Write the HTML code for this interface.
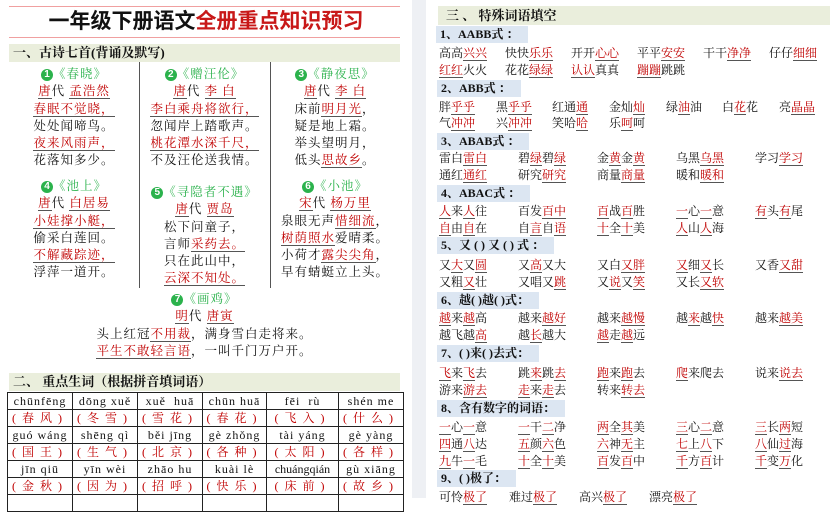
<!DOCTYPE html>
<html><head><meta charset="utf-8">
<style>
*{margin:0;padding:0;box-sizing:border-box}
body{width:839px;height:498px;overflow:hidden;background:#fff;position:relative;font-family:"Liberation Serif","Noto Serif CJK SC",serif;color:#111}
.a{position:absolute;white-space:nowrap}
.r{color:#c00000;font-weight:normal;border-bottom:1.5px solid #555}
.bar{position:absolute;background:#eaeedc;font-weight:bold;font-size:13px;line-height:18px;padding-left:4px;white-space:nowrap}
.lab{position:absolute;background:#dce6f2;font-weight:bold;font-size:12px;line-height:17px;padding:0 10px 0 4px;height:17px;white-space:nowrap;width:auto!important}
.col{position:absolute;text-align:center;font-size:12.5px;letter-spacing:1px}
.col div{height:17.3px;line-height:17px;white-space:nowrap}
.t{color:#2bb24c}
.n{display:inline-block;width:12px;height:12px;border-radius:50%;background:#2bb24c;color:#fff;font-size:10px;line-height:12px;font-weight:bold;text-align:center;letter-spacing:0;font-family:"Liberation Sans",sans-serif;vertical-align:1px}
.row{position:absolute;left:439px;font-size:12px;line-height:16px;white-space:nowrap}
.row span.c{display:inline-block}
table{position:absolute;left:7px;top:392px;border-collapse:collapse;font-size:12px;table-layout:fixed}
td{border:1px solid #222;height:17px;text-align:center;padding:0;line-height:15px;white-space:nowrap;overflow:hidden}
td.p{letter-spacing:1px}
td.h{color:#c00000;letter-spacing:6px}
</style></head><body>
<div class="a" style="left:412px;top:0;width:14px;height:498px;background:#eef0f4"></div>
<div class="a" style="left:9px;top:6px;width:391px;height:1px;background:#f0a0a0"></div>
<div class="a" style="left:9px;top:37px;width:391px;height:1px;background:#f0a0a0"></div>
<div class="a" style="left:0;width:412px;top:9px;text-align:center;font-size:21px;font-weight:bold;line-height:26px;font-family:'Liberation Sans','Noto Sans CJK SC',sans-serif">一年级下册语文<span style="color:#c81818">全册重点知识预习</span></div>
<div class="bar" style="left:9px;top:44px;width:391px">一、古诗七首(背诵及默写)</div>
<div class="a" style="left:139px;top:62px;width:1px;height:226px;background:#555"></div>
<div class="a" style="left:270px;top:62px;width:1px;height:226px;background:#555"></div>

<div class="col" style="left:9px;top:66px;width:130px">
<div class="t"><span class="n">1</span>《春晓》</div>
<div><span class="r">唐</span>代 <span class="r">孟浩然</span></div>
<div><span class="r">春眠不觉晓，</span></div>
<div>处处闻啼鸟。</div>
<div><span class="r">夜来风雨声，</span></div>
<div>花落知多少。</div>
</div>
<div class="col" style="left:9px;top:178px;width:130px">
<div class="t"><span class="n">4</span>《池上》</div>
<div><span class="r">唐</span>代 <span class="r">白居易</span></div>
<div><span class="r">小娃撑小艇，</span></div>
<div>偷采白莲回。</div>
<div><span class="r">不解藏踪迹，</span></div>
<div>浮萍一道开。</div>
</div>
<div class="col" style="left:139px;top:66px;width:131px">
<div class="t"><span class="n">2</span>《赠汪伦》</div>
<div><span class="r">唐</span>代 <span class="r">李 白</span></div>
<div><span class="r">李白乘舟将欲行，</span></div>
<div>忽闻岸上踏歌声。</div>
<div><span class="r">桃花潭水深千尺，</span></div>
<div>不及汪伦送我情。</div>
</div>
<div class="col" style="left:139px;top:184px;width:131px">
<div class="t"><span class="n">5</span>《寻隐者不遇》</div>
<div><span class="r">唐</span>代 <span class="r">贾岛</span></div>
<div>松下问童子，</div>
<div>言师<span class="r">采药去。</span></div>
<div>只在此山中，</div>
<div><span class="r">云深不知处。</span></div>
</div>
<div class="col" style="left:270px;top:66px;width:130px">
<div class="t"><span class="n">3</span>《静夜思》</div>
<div><span class="r">唐</span>代 <span class="r">李 白</span></div>
<div>床前<span class="r">明月光</span>，</div>
<div>疑是地上霜。</div>
<div>举头望明月，</div>
<div>低头<span class="r">思故乡</span>。</div>
</div>
<div class="col" style="left:270px;top:178px;width:130px">
<div class="t"><span class="n">6</span>《小池》</div>
<div><span class="r">宋</span>代 <span class="r">杨万里</span></div>
<div>泉眼无声<span class="r">惜细流</span>，</div>
<div><span class="r">树荫照水</span>爱晴柔。</div>
<div>小荷才<span class="r">露尖尖角</span>，</div>
<div>早有蜻蜓立上头。</div>
</div>
<div class="col" style="left:9px;top:291px;width:391px">
<div class="t"><span class="n">7</span>《画鸡》</div>
<div><span class="r">明</span>代 <span class="r">唐寅</span></div>
<div>头上红冠<span class="r">不用裁</span>，满身雪白走将来。</div>
<div><span class="r">平生不敢轻言语</span>，一叫千门万户开。</div>
</div>
<div class="bar" style="left:9px;top:373px;width:391px">二、 重点生词（根据拼音填词语）</div>
<table style="width:396px">
<colgroup><col style="width:65px"><col style="width:65px"><col style="width:65px"><col style="width:64px"><col style="width:72px"><col style="width:65px"></colgroup>
<tr><td class="p">chūnfēng</td><td class="p">dōng xuě</td><td class="p">xuě &nbsp;huā</td><td class="p">chūn huā</td><td class="p">fēi &nbsp;rù</td><td class="p">shén me</td></tr>
<tr><td class="h">(春风)</td><td class="h">(冬雪)</td><td class="h">(雪花)</td><td class="h">(春花)</td><td class="h">(飞入)</td><td class="h">(什么)</td></tr>
<tr><td class="p">guó wáng</td><td class="p">shēng qì</td><td class="p">běi jīng</td><td class="p">gè zhǒng</td><td class="p">tài yáng</td><td class="p">gè yàng</td></tr>
<tr><td class="h">(国王)</td><td class="h">(生气)</td><td class="h">(北京)</td><td class="h">(各种)</td><td class="h">(太阳)</td><td class="h">(各样)</td></tr>
<tr><td class="p">jīn qiū</td><td class="p">yīn wèi</td><td class="p">zhāo hu</td><td class="p">kuài lè</td><td class="p" style="letter-spacing:0">chuángqián</td><td class="p">gù xiāng</td></tr>
<tr><td class="h">(金秋)</td><td class="h">(因为)</td><td class="h">(招呼)</td><td class="h">(快乐)</td><td class="h">(床前)</td><td class="h">(故乡)</td></tr>
<tr><td>&nbsp;</td><td></td><td></td><td></td><td></td><td></td></tr>
</table>

<div class="bar" style="left:438px;top:6px;width:392px;padding-left:8px;line-height:19px">三 、 特殊词语填空</div>
<div class="lab" style="left:436px;top:26px">1、AABB式 ：</div>
<div class="row" style="top:45px"><span class="c" style="width:66px">高高<span class="r">兴兴</span></span><span class="c" style="width:66px">快快<span class="r">乐乐</span></span><span class="c" style="width:66px">开开<span class="r">心心</span></span><span class="c" style="width:66px">平平<span class="r">安安</span></span><span class="c" style="width:66px">干干<span class="r">净净</span></span><span class="c">仔仔<span class="r">细细</span></span></div>
<div class="row" style="top:62px"><span class="c" style="width:66px"><span class="r">红红</span>火火</span><span class="c" style="width:66px">花花<span class="r">绿绿</span></span><span class="c" style="width:66px"><span class="r">认认</span>真真</span><span class="c" style="width:66px"><span class="r">蹦蹦</span>跳跳</span></div>
<div class="lab" style="left:437px;top:80px">2、ABB式 ：</div>
<div class="row" style="top:99px"><span class="c" style="width:57px">胖<span class="r">乎乎</span></span><span class="c" style="width:56px">黑<span class="r">乎乎</span></span><span class="c" style="width:57px">红通<span class="r">通</span></span><span class="c" style="width:57px">金灿<span class="r">灿</span></span><span class="c" style="width:56px">绿<span class="r">油</span>油</span><span class="c" style="width:57px">白<span class="r">花</span>花</span><span class="c">亮<span class="r">晶晶</span></span></div>
<div class="row" style="top:115px"><span class="c" style="width:57px">气<span class="r">冲冲</span></span><span class="c" style="width:56px">兴<span class="r">冲冲</span></span><span class="c" style="width:57px">笑哈<span class="r">哈</span></span><span class="c" style="width:57px">乐<span class="r">呵</span>呵</span></div>
<div class="lab" style="left:437px;top:133px">3、ABAB式 ：</div>
<div class="row" style="top:150px"><span class="c" style="width:79px">雷白<span class="r">雷白</span></span><span class="c" style="width:79px">碧<span class="r">绿</span>碧<span class="r">绿</span></span><span class="c" style="width:79px">金<span class="r">黄</span>金<span class="r">黄</span></span><span class="c" style="width:79px">乌黑<span class="r">乌黑</span></span><span class="c">学习<span class="r">学习</span></span></div>
<div class="row" style="top:167px"><span class="c" style="width:79px">通红<span class="r">通红</span></span><span class="c" style="width:79px">研究<span class="r">研究</span></span><span class="c" style="width:79px">商量<span class="r">商量</span></span><span class="c" style="width:79px">暖和<span class="r">暖和</span></span></div>
<div class="lab" style="left:437px;top:185px">4、ABAC式 ：</div>
<div class="row" style="top:203px"><span class="c" style="width:79px"><span class="r">人</span>来<span class="r">人</span>往</span><span class="c" style="width:79px">百发<span class="r">百中</span></span><span class="c" style="width:79px"><span class="r">百</span>战<span class="r">百</span>胜</span><span class="c" style="width:79px"><span class="r">一</span>心<span class="r">一</span>意</span><span class="c"><span class="r">有</span>头<span class="r">有</span>尾</span></div>
<div class="row" style="top:220px"><span class="c" style="width:79px"><span class="r">自</span>由<span class="r">自</span>在</span><span class="c" style="width:79px">自<span class="r">言</span>自<span class="r">语</span></span><span class="c" style="width:79px"><span class="r">十</span>全<span class="r">十</span>美</span><span class="c" style="width:79px"><span class="r">人</span>山<span class="r">人</span>海</span></div>
<div class="lab" style="left:437px;top:237px">5、又 ( ) 又 ( ) 式 ：</div>
<div class="row" style="top:257px"><span class="c" style="width:79px">又<span class="r">大</span>又<span class="r">圆</span></span><span class="c" style="width:79px">又<span class="r">高</span>又大</span><span class="c" style="width:79px">又白<span class="r">又胖</span></span><span class="c" style="width:79px"><span class="r">又</span>细<span class="r">又</span>长</span><span class="c">又香<span class="r">又甜</span></span></div>
<div class="row" style="top:274px"><span class="c" style="width:79px">又粗<span class="r">又</span>壮</span><span class="c" style="width:79px">又唱又<span class="r">跳</span></span><span class="c" style="width:79px">又<span class="r">说</span>又<span class="r">笑</span></span><span class="c" style="width:79px">又长<span class="r">又软</span></span></div>
<div class="lab" style="left:437px;top:292px">6、越( )越( )式：</div>
<div class="row" style="top:310px"><span class="c" style="width:79px"><span class="r">越</span>来<span class="r">越</span>高</span><span class="c" style="width:79px">越来<span class="r">越好</span></span><span class="c" style="width:79px">越来<span class="r">越慢</span></span><span class="c" style="width:79px">越<span class="r">来</span>越<span class="r">快</span></span><span class="c">越来<span class="r">越美</span></span></div>
<div class="row" style="top:327px"><span class="c" style="width:79px">越飞越<span class="r">高</span></span><span class="c" style="width:79px">越<span class="r">长</span>越大</span><span class="c" style="width:79px"><span class="r">越</span>走<span class="r">越</span>远</span></div>
<div class="lab" style="left:437px;top:345px">7、( )来( )去式：</div>
<div class="row" style="top:365px"><span class="c" style="width:79px"><span class="r">飞</span>来<span class="r">飞</span>去</span><span class="c" style="width:79px">跳<span class="r">来</span>跳<span class="r">去</span></span><span class="c" style="width:79px"><span class="r">跑</span>来<span class="r">跑</span>去</span><span class="c" style="width:79px"><span class="r">爬</span>来爬去</span><span class="c">说来<span class="r">说去</span></span></div>
<div class="row" style="top:382px"><span class="c" style="width:79px">游来<span class="r">游去</span></span><span class="c" style="width:79px"><span class="r">走</span>来<span class="r">走</span>去</span><span class="c" style="width:79px">转来<span class="r">转去</span></span></div>
<div class="lab" style="left:437px;top:400px">8、含有数字的词语：</div>
<div class="row" style="top:419px"><span class="c" style="width:79px"><span class="r">一</span>心<span class="r">一</span>意</span><span class="c" style="width:79px"><span class="r">一</span>干<span class="r">二</span>净</span><span class="c" style="width:79px"><span class="r">两</span>全<span class="r">其</span>美</span><span class="c" style="width:79px"><span class="r">三</span>心<span class="r">二</span>意</span><span class="c"><span class="r">三</span>长<span class="r">两</span>短</span></div>
<div class="row" style="top:436px"><span class="c" style="width:79px"><span class="r">四</span>通<span class="r">八</span>达</span><span class="c" style="width:79px"><span class="r">五</span>颜<span class="r">六</span>色</span><span class="c" style="width:79px"><span class="r">六</span>神<span class="r">无</span>主</span><span class="c" style="width:79px"><span class="r">七</span>上<span class="r">八</span>下</span><span class="c"><span class="r">八</span>仙<span class="r">过</span>海</span></div>
<div class="row" style="top:453px"><span class="c" style="width:79px"><span class="r">九</span>牛<span class="r">一</span>毛</span><span class="c" style="width:79px"><span class="r">十</span>全<span class="r">十</span>美</span><span class="c" style="width:79px"><span class="r">百</span>发<span class="r">百</span>中</span><span class="c" style="width:79px"><span class="r">千</span>方<span class="r">百</span>计</span><span class="c"><span class="r">千</span>变<span class="r">万</span>化</span></div>
<div class="lab" style="left:437px;top:470px">9、( )极了：</div>
<div class="row" style="top:489px"><span class="c" style="width:70px">可怜<span class="r">极了</span></span><span class="c" style="width:70px">难过<span class="r">极了</span></span><span class="c" style="width:70px">高兴<span class="r">极了</span></span><span class="c">漂亮<span class="r">极了</span></span></div>
</body></html>
